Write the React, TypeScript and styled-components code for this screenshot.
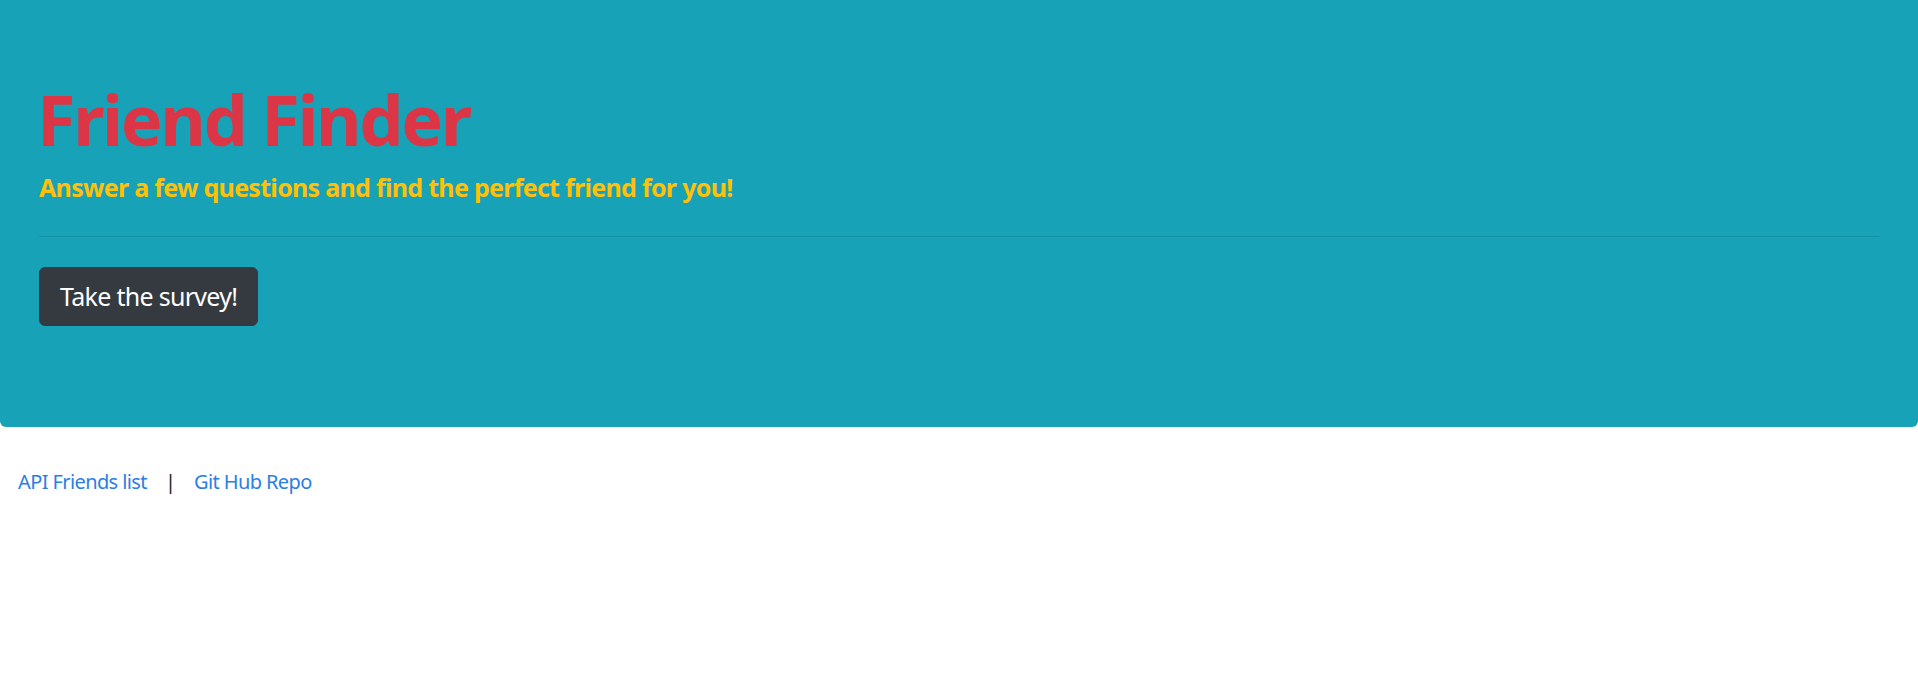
import React from 'react'
import { createGlobalStyle, styled } from 'styled-components'

const GlobalStyle = createGlobalStyle`
  html, body {
    margin: 0;
    padding: 0;
    background: #fff;
    font-family: "Noto Sans", "Open Sans", sans-serif;
    color: #212529;
  }
`

const Jumbotron = styled.header`
  background-color: #17a2b8;
  padding: 77px 39px 80px;
  margin-bottom: 40px;
  border-radius: 0 0 6px 6px;
`

const Title = styled.h1`
  margin: 0 0 11px -2px;
  font-size: 70px;
  line-height: 84px;
  font-weight: 700;
  color: #dc3545;
  letter-spacing: -2.3px;
`

const Lead = styled.h5`
  margin: 0;
  font-size: 25px;
  line-height: 30px;
  font-weight: 700;
  color: #ffc107;
  letter-spacing: -0.7px;
`

const Divider = styled.hr`
  margin: 34px 0 30px;
  border: 0;
  border-top: 1px solid rgba(0, 0, 0, 0.1);
`

const ButtonRow = styled.p`
  margin: 0 0 21px;
  line-height: 0;
`

const SurveyButton = styled.a`
  display: inline-block;
  padding: 10px 20px;
  border: 1px solid #343a40;
  border-radius: 6px;
  background-color: #343a40;
  color: #fff;
  font-size: 25px;
  line-height: 37px;
  letter-spacing: -0.7px;
  text-decoration: none;
`

const Links = styled.nav`
  display: flex;
  align-items: baseline;
  gap: 18px;
  padding: 0 18px;
  font-size: 20px;
  line-height: 30px;

  a {
    color: #2a7ee6;
    text-decoration: none;
    letter-spacing: -0.6px;
  }
`

const Sep = styled.span`
  color: #212529;
`

function App() {
  return (
    <>
      <GlobalStyle />
      <Jumbotron>
        <Title>Friend Finder</Title>
        <Lead>Answer a few questions and find the perfect friend for you!</Lead>
        <Divider />
        <ButtonRow>
          <SurveyButton href="/survey">Take the survey!</SurveyButton>
        </ButtonRow>
      </Jumbotron>
      <Links>
        <a href="/api/friends">API Friends list</a>
        <Sep>|</Sep>
        <a href="https://github.com">Git Hub Repo</a>
      </Links>
    </>
  )
}

export default App
